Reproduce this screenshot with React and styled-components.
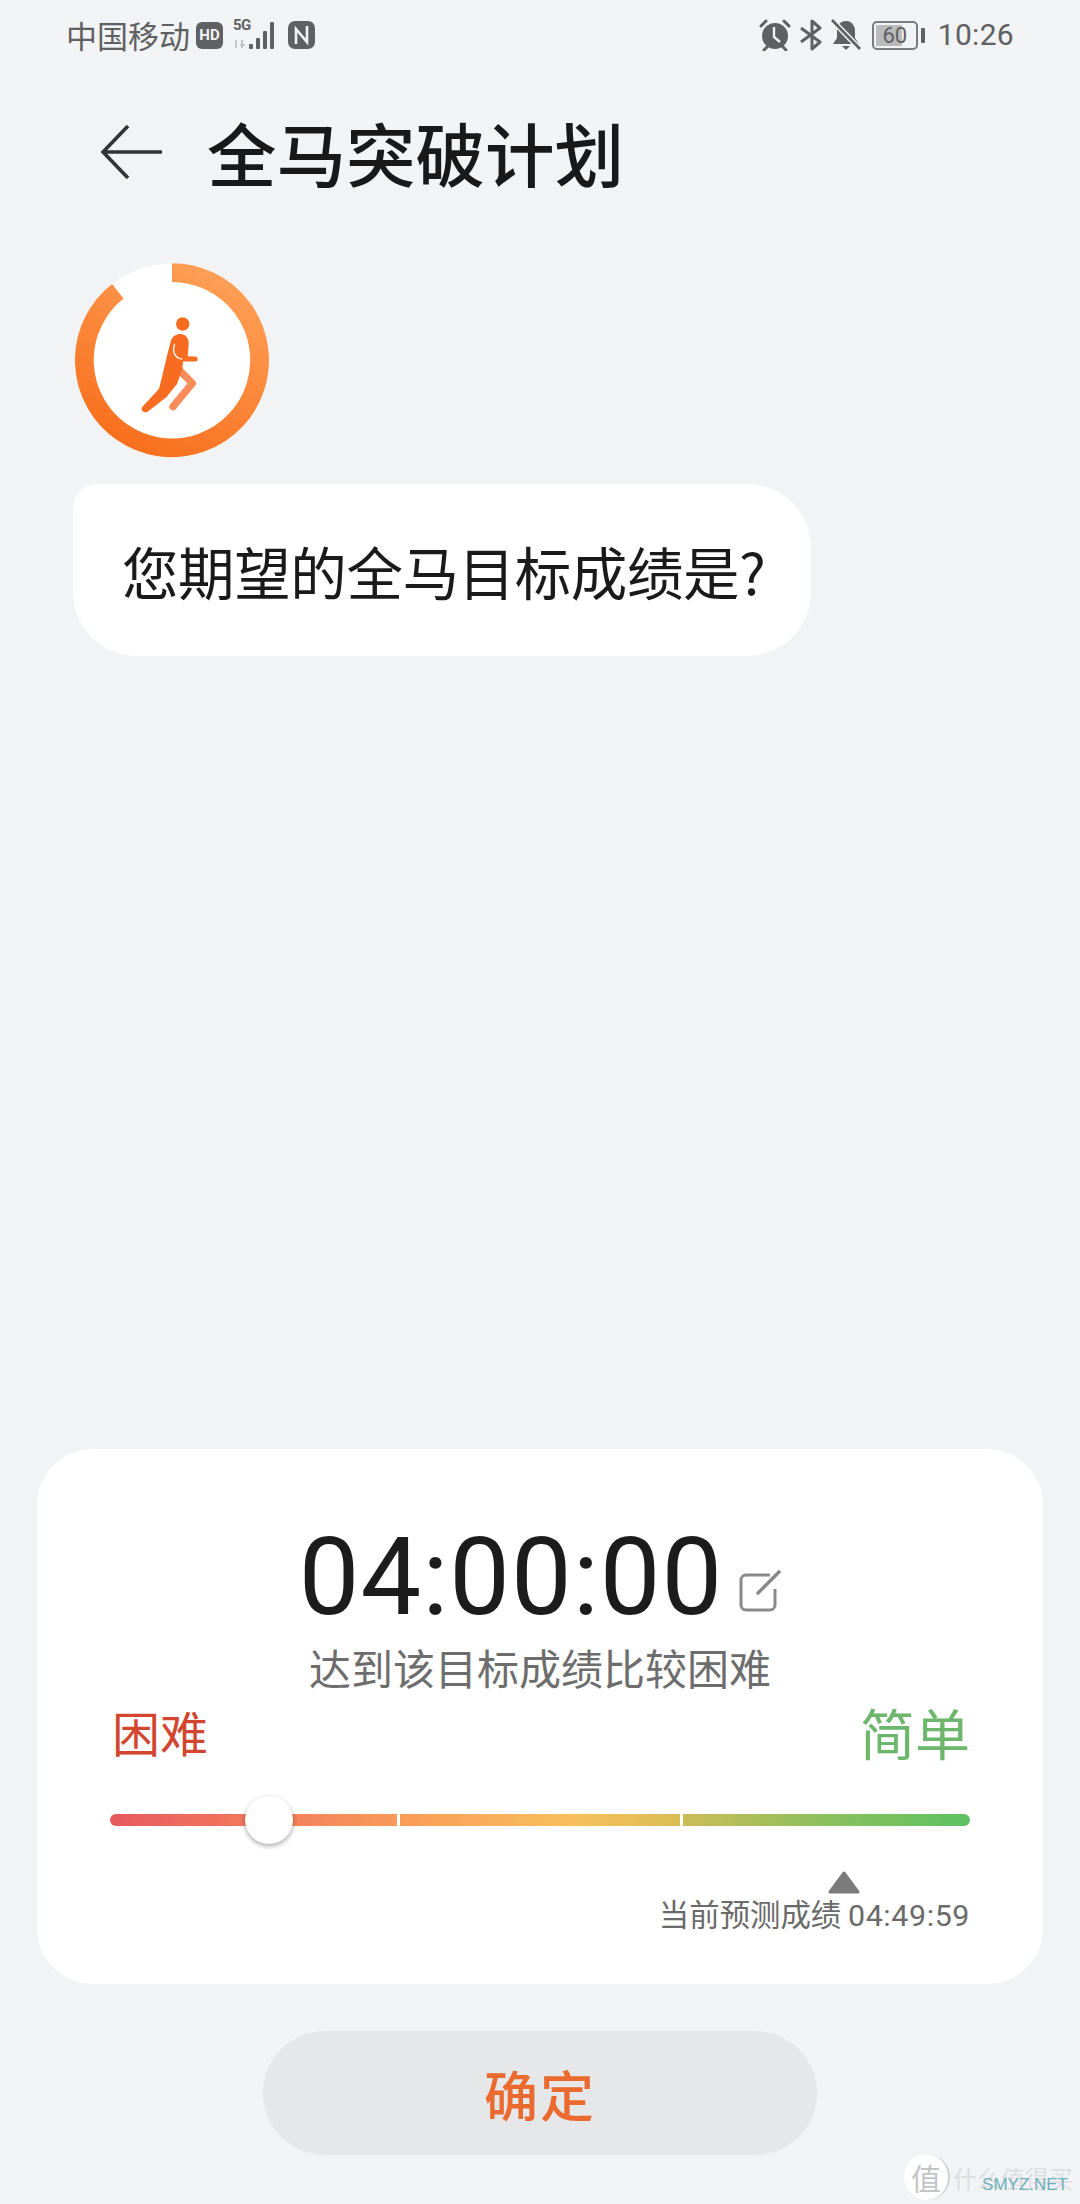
import React from 'react';
import styled, { createGlobalStyle } from 'styled-components';

const GlobalStyle = createGlobalStyle`
	html, body {
		margin: 0;
		padding: 0;
		background: #f1f3f5;
	}
	* {
		box-sizing: border-box;
	}
`;

const Page = styled.div`
	position: relative;
	display: flex;
	flex-direction: column;
	width: 1080px;
	height: 2204px;
	overflow: hidden;
	padding-bottom: 49px;
	background: #f1f3f5;
	color: #1a1a1a;
	font-family: 'Noto Sans CJK SC', 'Noto Sans', sans-serif;
`;

const StatusBar = styled.div`
	display: flex;
	justify-content: space-between;
	align-items: center;
	height: 70px;
	padding: 0 66px 0 66px;
	color: #5f6062;
`;

const StatusGroup = styled.div`
	display: flex;
	align-items: center;
	gap: ${(props) => props.gap || 6}px;
`;

const Carrier = styled.span`
	font-size: 31px;
	line-height: 36px;
`;

const HdBadge = styled.span`
	display: flex;
	justify-content: center;
	align-items: center;
	width: 27px;
	height: 27px;
	border-radius: 6px;
	background: #5f6062;
	color: #f1f3f5;
	font-family: 'Roboto', sans-serif;
	font-size: 15px;
	font-weight: 700;
`;

const Signal = styled.div`
	display: flex;
	align-items: flex-end;
	width: 47px;
	height: 30px;
	position: relative;
	margin: 0 2px 0 4px;
`;

const FiveG = styled.span`
	position: absolute;
	left: 0;
	top: -3px;
	font-family: 'Roboto', sans-serif;
	font-size: 15px;
	font-weight: 700;
	line-height: 17px;
	letter-spacing: -0.5px;
`;

const Clock = styled.span`
	margin-left: 12px;
	font-family: 'Roboto', sans-serif;
	font-size: 30px;
	line-height: 36px;
	letter-spacing: 0.3px;
`;

const Battery = styled.div`
	position: relative;
	display: flex;
	justify-content: center;
	align-items: center;
	width: 46px;
	height: 29px;
	margin-left: 3px;
	border: 2px solid #7a7b7d;
	border-radius: 5px;
	font-family: 'Roboto', sans-serif;
	font-size: 22px;
	font-weight: 400;
	background: linear-gradient(90deg, #b9babc 0 66%, transparent 66%);
	background-clip: content-box;
	padding: 2px;

	&::after {
		content: '';
		position: absolute;
		right: -9px;
		top: 5px;
		width: 4px;
		height: 15px;
		border-radius: 1px;
		background: #5f6062;
	}
`;

const Header = styled.div`
	display: flex;
	align-items: center;
	gap: 45px;
	height: 164px;
	padding-left: 100px;
`;

const Title = styled.h1`
	margin: 0;
	font-size: 69.5px;
	font-weight: 500;
	line-height: 90px;
	color: #191919;
`;

const Conversation = styled.div`
	display: flex;
	flex-direction: column;
	align-items: flex-start;
	gap: 25px;
	padding: 29px 0 0 73px;
`;

const Logo = styled.svg`
	display: block;
	width: 194px;
	height: 196px;
	margin-left: 2px;
`;

const Bubble = styled.div`
	display: flex;
	align-items: center;
	width: 738px;
	height: 172px;
	padding-left: 49px;
	border-radius: 24px 64px 64px 64px;
	background: #fff;
	font-size: 56.5px;
	letter-spacing: -0.4px;
	color: #1a1a1a;
`;

const Card = styled.div`
	display: flex;
	flex-direction: column;
	height: 535px;
	margin: auto 37px 0;
	padding: 63px 73px 0;
	border-radius: 56px;
	background: #fff;
`;

const TimeRow = styled.div`
	display: flex;
	justify-content: center;
	align-items: flex-end;
	gap: 16px;
	height: 130px;
`;

const Time = styled.span`
	font-family: 'Roboto', sans-serif;
	font-size: 108px;
	font-weight: 400;
	line-height: 130px;
	letter-spacing: 1px;
	color: #1c1c1c;
`;

const EditIcon = styled.svg`
	display: block;
	width: 42px;
	height: 44px;
	margin-bottom: 29px;
`;

const Hint = styled.div`
	height: 50px;
	font-size: 42px;
	line-height: 50px;
	text-align: center;
	color: #6d6d6d;
`;

const LabelRow = styled.div`
	display: flex;
	justify-content: space-between;
	align-items: center;
	height: 70px;
	margin-top: 4px;
	padding-left: 2px;
`;

const Difficulty = styled.span`
	font-size: ${(props) => props.size}px;
	line-height: 70px;
	color: ${(props) => props.color};
`;

const Slider = styled.div`
	position: relative;
	display: flex;
	gap: 3px;
	height: 12px;
	margin-top: 48px;
`;

const Segment = styled.div`
	flex: ${(props) => props.grow};
	background: linear-gradient(90deg, ${(props) => props.stops});
	border-radius: ${(props) => props.radius || '0'};
`;

const Knob = styled.div`
	position: absolute;
	top: -18px;
	width: 48px;
	height: 48px;
	margin-left: -24px;
	border-radius: 50%;
	background: #fff;
	box-shadow: 0 2px 5px rgba(0, 0, 0, 0.35);
`;

const Forecast = styled.div`
	display: flex;
	flex-direction: column;
	align-items: flex-end;
	margin-top: 45px;
`;

const Marker = styled.svg`
	display: block;
	width: 32px;
	height: 23px;
	margin-right: 110px;
`;

const ForecastText = styled.span`
	font-size: 30.4px;
	line-height: 38px;
	color: #6a6a6a;
	font-family: 'Noto Sans CJK SC', sans-serif;
`;

const ForecastTime = styled.span`
	font-family: 'Roboto', sans-serif;
	letter-spacing: 0.6px;
`;

const ConfirmButton = styled.button`
	align-self: center;
	width: 554px;
	height: 124px;
	margin-top: 47px;
	flex-shrink: 0;
	border: none;
	border-radius: 62px;
	background: #e6e7e9;
	color: #ea6a2f;
	font-family: 'Noto Sans CJK SC', sans-serif;
	font-size: 54px;
	font-weight: 500;
	letter-spacing: 2px;
`;

const Watermark = styled.div`
	position: absolute;
	left: 904px;
	bottom: 4px;
	display: flex;
	align-items: center;
	gap: 3px;
	color: #dcdee0;
	font-size: 24px;
	white-space: nowrap;
`;

const WatermarkSeal = styled.span`
	display: flex;
	justify-content: center;
	align-items: center;
	width: 46px;
	height: 46px;
	border-radius: 50%;
	background: #fff;
	color: #c4c5c7;
	font-size: 30px;
	border-right: 2px solid #cfd0d2;
`;

const WatermarkSite = styled.span`
	position: absolute;
	right: 5px;
	bottom: 4px;
	color: #6fb0bd;
	font-family: 'Liberation Sans', sans-serif;
	font-size: 17px;
	line-height: 22px;
`;

const AlarmIcon = () => (
	<svg width="32" height="32" viewBox="0 0 32 32">
		<circle cx="16" cy="17" r="13" fill="#5f6062" />
		<path d="M15 8v10l6 5" stroke="#f1f3f5" strokeWidth="2.4" fill="none" />
		<path d="M2 7l5-5M30 7l-5-5M8 28l-3 3M24 28l3 3" stroke="#5f6062" strokeWidth="3" strokeLinecap="round" />
	</svg>
);

const BluetoothIcon = () => (
	<svg width="24" height="32" viewBox="0 0 24 32">
		<path d="M2 9l19 14-8 7V2l8 7L2 23" fill="none" stroke="#5f6062" strokeWidth="3" strokeLinejoin="round" />
	</svg>
);

const MutedBellIcon = () => (
	<svg width="30" height="32" viewBox="0 0 30 32">
		<path d="M15 2C9 2 6 7 6 12v7l-4 6h26l-4-6v-7c0-5-3-10-9-10z" fill="#5f6062" />
		<path d="M11 27h8l-4 4z" fill="#5f6062" />
		<path d="M1 1l28 29" stroke="#f1f3f5" strokeWidth="5.5" />
		<path d="M1 1l28 29" stroke="#5f6062" strokeWidth="2.6" />
	</svg>
);

const NfcIcon = () => (
	<svg width="27" height="28" viewBox="0 0 27 28">
		<rect width="27" height="28" rx="7" fill="#5f6062" />
		<path d="M8 23V8l11 13V5" fill="none" stroke="#f1f3f5" strokeWidth="2.6" />
	</svg>
);

const SignalBars = () => (
	<svg width="47" height="30" viewBox="0 0 47 30">
		<path d="M3 20v8M9 20v8M7 25h5" fill="none" stroke="#c5c6c8" strokeWidth="2" />
		<rect x="16" y="24" width="4" height="5" rx="1" fill="#5f6062" />
		<rect x="23" y="18" width="4" height="11" rx="1" fill="#5f6062" />
		<rect x="30" y="11" width="4" height="18" rx="1" fill="#5f6062" />
		<rect x="37" y="2" width="4" height="27" rx="1" fill="#5f6062" />
	</svg>
);

const BackArrow = () => (
	<svg width="62" height="56" viewBox="0 0 62 56">
		<path d="M62 28H4M28 2L3 28l25 26" fill="none" stroke="#333" strokeWidth="3.6" />
	</svg>
);

const RunnerLogo = () => (
	<Logo viewBox="45 69 580 585">
		<defs>
			<linearGradient id="ring" x1="0.8" y1="0" x2="0.3" y2="1">
				<stop offset="0" stopColor="#ffa057" />
				<stop offset="1" stopColor="#f8701e" />
			</linearGradient>
		</defs>
		<circle cx="335" cy="360" r="290" fill="#fff" />
		<path d="M335 97A262 262 0 1 1 173 153" fill="none" stroke="url(#ring)" strokeWidth="56" />
		<circle cx="367" cy="251" r="20" fill="#f86c22" />
		<path d="M358 390l38 38-58 70" fill="none" stroke="#fa8c5c" strokeWidth="22" strokeLinecap="round" strokeLinejoin="round" />
		<path
			d="M332 300C338 282 362 275 376 287C386 296 386 310 384 322L382 347L405 348C414 349 414 362 405 363L368 363L366 385L350 430L318 470L262 513C250 520 238 506 248 497L296 445C308 400 318 350 332 300Z"
			fill="#f86c22"
		/>
		<path d="M343 310C336 332 340 352 366 356" fill="none" stroke="#fff" strokeWidth="4" />
	</Logo>
);

const App = () => {
	const knobPosition = ((269 - 110) / 860) * 100;
	return (
		<Page>
			<GlobalStyle />
			<StatusBar>
				<StatusGroup>
					<Carrier>中国移动</Carrier>
					<HdBadge>HD</HdBadge>
					<Signal>
						<FiveG>5G</FiveG>
						<SignalBars />
					</Signal>
					<NfcIcon />
				</StatusGroup>
				<StatusGroup gap={8}>
					<AlarmIcon />
					<BluetoothIcon />
					<MutedBellIcon />
					<Battery>60</Battery>
					<Clock>10:26</Clock>
				</StatusGroup>
			</StatusBar>
			<Header>
				<BackArrow />
				<Title>全马突破计划</Title>
			</Header>
			<Conversation>
				<RunnerLogo />
				<Bubble>您期望的全马目标成绩是?</Bubble>
			</Conversation>
			<Card>
				<TimeRow>
					<Time>04:00:00</Time>
					<EditIcon viewBox="0 0 42 44">
						<path d="M36 20v16a5 5 0 0 1-5 5H7a5 5 0 0 1-5-5V11a5 5 0 0 1 5-5h24" fill="none" stroke="#8a8a8a" strokeWidth="3" />
						<path d="M19 24L40 3" stroke="#8a8a8a" strokeWidth="3.6" strokeLinecap="round" />
					</EditIcon>
				</TimeRow>
				<Hint>达到该目标成绩比较困难</Hint>
				<LabelRow>
					<Difficulty size={48} color="#d2452f">困难</Difficulty>
					<Difficulty size={55} color="#6cb76c">简单</Difficulty>
				</LabelRow>
				<Slider>
					<Segment grow={287} radius="6px 0 0 6px" stops="#e85a5e, #f9995a" />
					<Segment grow={280} stops="#f99b58, #f8c05c 60%, #dcbd55" />
					<Segment grow={287} radius="0 6px 6px 0" stops="#cdbc58, #8fc05c 45%, #5ec163" />
					<Knob style={{ left: `${knobPosition}%` }} />
				</Slider>
				<Forecast>
					<Marker viewBox="0 0 32 23">
						<path d="M16 2L2 21h28z" fill="#7b7b7b" stroke="#7b7b7b" strokeWidth="3" strokeLinejoin="round" />
					</Marker>
					<ForecastText>
						当前预测成绩 <ForecastTime>04:49:59</ForecastTime>
					</ForecastText>
				</Forecast>
			</Card>
			<ConfirmButton>确定</ConfirmButton>
			<Watermark>
				<WatermarkSeal>值</WatermarkSeal>
				<span>什么值得买</span>
				<WatermarkSite>SMYZ.NET</WatermarkSite>
			</Watermark>
		</Page>
	);
};

export default App;
